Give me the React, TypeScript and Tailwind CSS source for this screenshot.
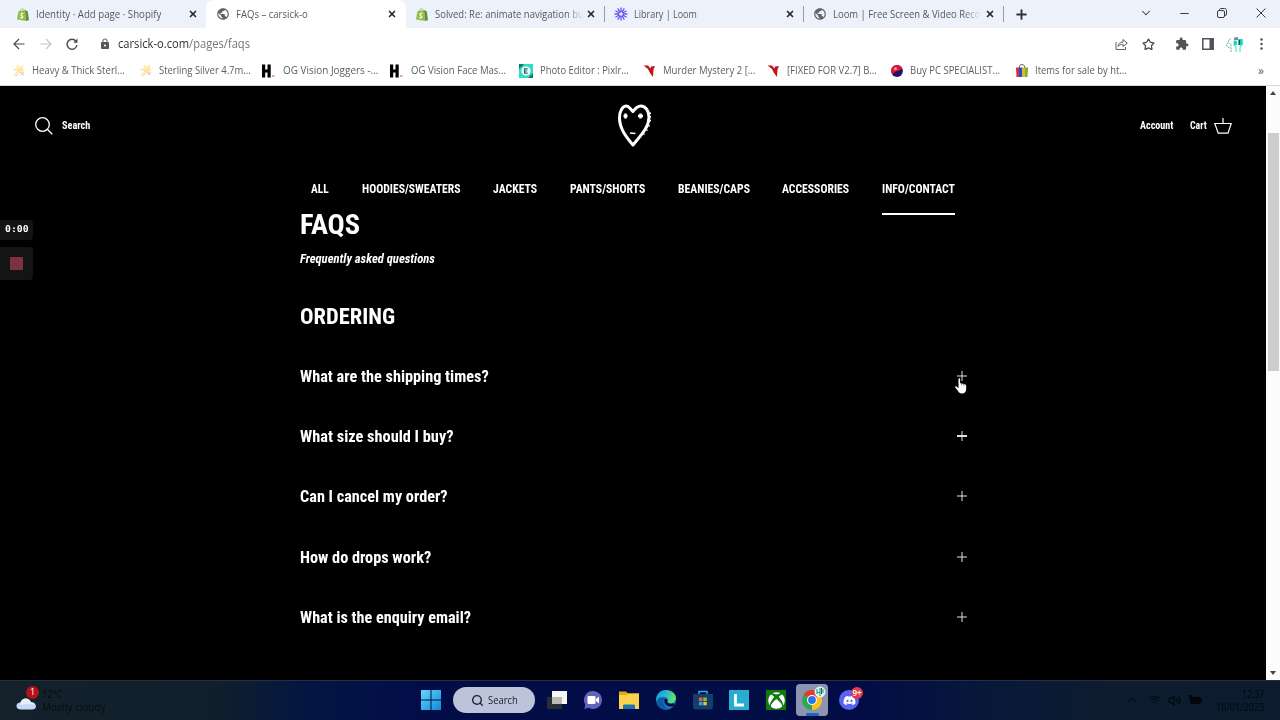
import { useLayoutEffect, useRef, useState, type ReactNode } from "react";
import { clsx } from "clsx";
import { FaDiscord, FaXbox } from "react-icons/fa";
import { MdExtension, MdLock, MdPublic } from "react-icons/md";
import { ChevronDown, ChevronUp, Minus, Plus, Search, Star, Volume2, Wifi, X } from "lucide-react";

interface FitProps {
  className: string;
  children: ReactNode;
}

// Single-line label that is squeezed or stretched to the width of its box
function Fit({ className, children }: FitProps) {
  const box = useRef<HTMLSpanElement>(null);
  const text = useRef<HTMLSpanElement>(null);
  const [scale, setScale] = useState(1);

  useLayoutEffect(() => {
    if (box.current && text.current) {
      setScale(box.current.clientWidth / text.current.offsetWidth);
    }
  }, []);

  return (
    <span ref={box} className={clsx("block shrink-0 whitespace-nowrap", className)}>
      <span ref={text} className="inline-block origin-left" style={{ transform: `scaleX(${scale})` }}>
        {children}
      </span>
    </span>
  );
}

function ShopifyIcon() {
  return (
    <svg viewBox="0 0 12 13" className="h-[13px] w-3">
      <path d="M1.4 3.2 8 2l1.2 10.9L0 11.5Z" fill="#95bf47" />
      <path d="m8 2 2.7 1.2L12 12l-2.8.9Z" fill="#5e8e3e" />
      <path d="M3.4 3C3.8 1.2 5 .3 6 .6c.8.3 1 1.2 1 2" fill="none" stroke="#95bf47" strokeWidth="0.8" />
      <path d="M6.4 5.5C5 4.9 3.8 5.5 4 6.7c.2 1 1.9 1.1 1.8 2.3-.1 1.1-1.4 1.2-2.5.4" fill="none" stroke="#fff" strokeWidth="1.2" />
    </svg>
  );
}

function LoomIcon() {
  return (
    <svg viewBox="0 0 14 14" className="size-[14px]" stroke="#6558f5" strokeWidth="1.3" strokeLinecap="round">
      {[0, 30, 60, 90, 120, 150].map((angle) => (
        <path key={angle} d="M7 1v12" transform={`rotate(${angle} 7 7)`} />
      ))}
      <circle cx="7" cy="7" r="2.4" fill="#edf1f9" strokeWidth="1.2" />
    </svg>
  );
}

function SilverIcon() {
  return (
    <svg viewBox="0 0 14 14" className="size-[14px]" fill="none">
      <path d="M3.500 4 8 2l3.500 2 .5 3-3 2.500L5 9Z" fill="#fcedb4" />
      <path d="M1.500 5 4 6M5 1l1 2M2 11l8-7M11 1l-1.5 2" stroke="#f8d98a" strokeWidth="1" />
      <path d="m3.500 12.500 3-3M9 11l3-3M8 8l4 3" stroke="#f2bfa6" strokeWidth="1" />
    </svg>
  );
}

function VisionIcon() {
  return (
    <svg viewBox="0 0 14 14" className="size-[14px]">
      <path d="M0 .5h3.200v5h2.300v-5h3.200v13H5.500v-5H3.200v5H0Z" fill="#000" />
      <path d="M10 11h2.500v2H10z" fill="#e3a2ac" />
    </svg>
  );
}

function PixlrIcon() {
  return (
    <svg viewBox="0 0 14 14" className="size-[14px]">
      <path d="M0 0h14v14H0Z" fill="#2edcc8" />
      <path d="M0 0h5L0 5ZM14 9v5H9Z" fill="#15766e" />
      <circle cx="7" cy="7" r="4.600" fill="#fff" />
      <path d="M8.700 4.800H5.500v4.400h3.200M5.500 7h2.800" fill="none" stroke="#1f625e" strokeWidth="1.200" />
    </svg>
  );
}

function MysteryIcon() {
  return (
    <svg viewBox="0 0 14 14" className="size-[14px]">
      <path d="M.5 1.500 5 1.500l2.500 3 .5-2L12 2l-1.500 3.500L10 13 7 9 5 5Z" fill="#c3131d" />
    </svg>
  );
}

function PcIcon() {
  return (
    <svg viewBox="0 0 14 14" className="size-[14px]">
      <circle cx="7" cy="7" r="5.900" fill="#1b1464" />
      <path d="M1.200 7a5.900 5.900 0 0 1 11-3C10 8 5 6 2.500 10.600A6 6 0 0 1 1.200 7Z" fill="#e0153d" />
      <circle cx="5.500" cy="4.800" r="1.500" fill="#ff9aa9" />
    </svg>
  );
}

function BagIcon() {
  return (
    <svg viewBox="0 0 14 14" className="size-[14px]">
      <path d="M4.500 5V2.500c0-2.500 5-2.500 5 0V5" fill="none" stroke="#555" />
      <path d="M1 3.500h3v9.500H1.500Z" fill="#d92d3c" />
      <path d="M4 3.500h3.500V13H4Z" fill="#2453c6" />
      <path d="M7.500 3.500H10V13H7.500Z" fill="#f3b51b" />
      <path d="M10 3.500h3l-.5 9.500H10Z" fill="#7fae2a" />
    </svg>
  );
}

const tabs = [
  { title: "Identity · Add page · Shopify", icon: <ShopifyIcon />, box: "w-[206px] pl-[16px]", width: "w-[125px]", close: "right-[8px]" },
  { title: "FAQs – carsick-o", icon: <MdPublic size={14} color="#5f6368" />, box: "w-[200px] pl-[10px] rounded-t-lg bg-white", width: "w-[72px]", close: "right-[9px]" },
  { title: "Solved: Re: animate navigation bu", icon: <ShopifyIcon />, box: "w-[199px] pl-[9px] border-r border-[#989ba3]", width: "w-[149px]", close: "right-[8px]", fade: true },
  { title: "Library | Loom", icon: <LoomIcon />, box: "w-[199px] pl-[9px] border-r border-[#989ba3]", width: "w-[63px]", close: "right-[8px]" },
  { title: "Loom | Free Screen & Video Reco", icon: <MdPublic size={14} color="#5f6368" />, box: "w-[200px] pl-[9px] border-r border-[#989ba3]", width: "w-[148px]", close: "right-[8px]", fade: true },
];

const bookmarks = [
  { title: "Heavy & Thick Sterl...", icon: <SilverIcon />, box: "w-[126.500px]", width: "w-[93px]" },
  { title: "Sterling Silver 4.7m...", icon: <SilverIcon />, box: "w-[123.500px]", width: "w-[92px]" },
  { title: "OG Vision Joggers -...", icon: <VisionIcon />, box: "w-[128px]", width: "w-[95px]", wide: true },
  { title: "OG Vision Face Mas...", icon: <VisionIcon />, box: "w-[129px]", width: "w-[95px]", wide: true },
  { title: "Photo Editor : Pixlr...", icon: <PixlrIcon />, box: "w-[124px]", width: "w-[89px]", wide: true },
  { title: "Murder Mystery 2 [...", icon: <MysteryIcon />, box: "w-[124px]", width: "w-[92px]" },
  { title: "[FIXED FOR V2.7] B...", icon: <MysteryIcon />, box: "w-[123px]", width: "w-[90px]" },
  { title: "Buy PC SPECIALIST...", icon: <PcIcon />, box: "w-[125px]", width: "w-[90px]" },
  { title: "Items for sale by ht...", icon: <BagIcon />, box: "w-[124px]", width: "w-[92px]" },
];

function TabStrip() {
  return (
    <div className="flex h-7 items-center bg-[#edf1f9] text-[11px] text-[#55585e]">
      {tabs.map((tab) => (
        <div key={tab.title} className={clsx("relative flex items-center", tab.box, tab.box.includes("border-r") ? "h-4" : "h-full")}>
          <span className="mr-[6px] flex w-[14px] shrink-0 justify-center">{tab.icon}</span>
          <span className={clsx("overflow-hidden", tab.fade && "[mask-image:linear-gradient(to_right,#000_88%,transparent)]")}>
            <Fit className={tab.width}>{tab.title}</Fit>
          </span>
          <X size={10} strokeWidth={4} className={clsx("absolute text-[#25272b]", tab.close)} />
        </div>
      ))}
      <Plus size={15} strokeWidth={3} className="ml-[10px] text-[#303238]" />
      <div className="ml-auto flex items-center pb-[2px] pr-[14px] text-[#3a3c42]">
        <ChevronDown size={14} strokeWidth={1.800} className="mr-[25px]" />
        <Minus size={13} strokeWidth={2} className="mr-[26px]" />
        <svg viewBox="0 0 10 10" className="mr-[29px] size-[10px]" fill="none" stroke="currentColor">
          <rect x="0.500" y="2.500" width="7" height="7" rx="1.500" />
          <path d="M2.500 2.500V2c0-1 .5-1.500 1.500-1.500h3.500c1.300 0 2 .7 2 2V6c0 1-.5 1.500-1.500 1.500" />
        </svg>
        <svg viewBox="0 0 10 10" className="size-[10px]" fill="none" stroke="currentColor">
          <path d="m.5.5 9 9M9.500.5l-9 9" />
        </svg>
      </div>
    </div>
  );
}

function Toolbar() {
  return (
    <div className="flex h-8 items-center bg-white pl-[13px] text-[12px] text-[#4a4d52]">
      <svg viewBox="0 0 12 12" className="mr-[15px] size-3" fill="none" stroke="currentColor" strokeWidth="1.200">
        <path d="M11.500 6H1M6 1 1 6l5 5" />
      </svg>
      <svg viewBox="0 0 12 12" className="mr-[14px] size-3" fill="none" stroke="#c3c5c9" strokeWidth="1.200">
        <path d="M.5 6H11M6 1l5 5-5 5" />
      </svg>
      <svg viewBox="0 0 12 12" className="mr-[21px] size-3" fill="none" stroke="currentColor" strokeWidth="1.400">
        <path d="M10 3.200A5 5 0 1 0 11 7" />
        <path d="M11.500.5v4.200H7.300Z" fill="currentColor" stroke="none" />
      </svg>
      <MdLock size={12} className="mr-[7px] text-[#55585d]" />
      <Fit className="w-[132px]">
        <span className="text-[#303135]">carsick-o.com</span>
        <span className="text-[#73767b]">/pages/faqs</span>
      </Fit>
      <div className="ml-auto flex items-center pr-[17px]">
        <svg viewBox="0 0 13 12" className="mr-[14px] h-3 w-[13px]" fill="none" stroke="#5f6368">
          <path d="M1 4v7.500h9.500V9" />
          <path d="M3 8.500C3.300 5.500 5 4 8 4V1.500l4.300 3.700L8 8.500V6.300C5.700 6.200 4.200 7 3 8.500Z" />
        </svg>
        <Star size={13} strokeWidth={2.400} className="mr-[20px]" />
        <MdExtension size={14} className="mr-[13px] text-[#505358]" />
        <svg viewBox="0 0 12 12" className="mr-[12px] size-3">
          <path d="M.8.8h10.400v10.400H.8Z" fill="none" stroke="#505358" strokeWidth="1.500" />
          <path d="M7.500 1H11v10H7.500Z" fill="#505358" />
        </svg>
        <svg viewBox="0 0 18 17" className="mr-[16px] h-[17px] w-[18px]" fill="none">
          <path d="M5 2.500C3 3.500 2 5 2.500 7l-2 1L1 10.500 4 12M5 16V8.500L3.500 7" stroke="#74a8a0" strokeDasharray="2 0.800" />
          <path d="M8 5v4.500l2 1V16M16.500 3v5L14 11v5" stroke="#5ee3c8" strokeWidth="1.200" />
          <path d="M8 5h3v4H8ZM12 3h4v6h-4Z" fill="#20d7b1" />
          <path d="M9 1.500v3M11 1v3M13.500 4v5" stroke="#154d54" strokeWidth="1.200" />
        </svg>
        <svg viewBox="0 0 3 12" className="h-3 w-[3px]" fill="#4a4d52">
          <circle cx="1.500" cy="1.500" r="1.200" />
          <circle cx="1.500" cy="6" r="1.200" />
          <circle cx="1.500" cy="10.500" r="1.200" />
        </svg>
      </div>
    </div>
  );
}

function Bookmarks() {
  return (
    <div className="flex h-[26px] items-center border-b border-[#d8d9dc] bg-white pb-[4px] pl-[12px] text-[11px] text-[#5a5d62]">
      {bookmarks.map((item) => (
        <div key={item.title} className={clsx("flex shrink-0 items-center", item.box)}>
          <span className={clsx("shrink-0", item.wide ? "mr-[7px]" : "mr-[6px]")}>{item.icon}</span>
          <Fit className={item.width}>{item.title}</Fit>
        </div>
      ))}
      <span className="ml-auto pr-[16px] text-[12px]">»</span>
    </div>
  );
}

const menu = [
  { label: "ALL", width: "w-[18px]" },
  { label: "HOODIES/SWEATERS", width: "w-[99px]" },
  { label: "JACKETS", width: "w-[44px]" },
  { label: "PANTS/SHORTS", width: "w-[75px]" },
  { label: "BEANIES/CAPS", width: "w-[72px]" },
  { label: "ACCESSORIES", width: "w-[67px]" },
  { label: "INFO/CONTACT", width: "w-[73px]", active: true },
];

const questions = [
  { text: "What are the shipping times?", width: "w-[188.500px]" },
  { text: "What size should I buy?", width: "w-[152.500px]", bold: true },
  { text: "Can I cancel my order?", width: "w-[148px]" },
  { text: "How do drops work?", width: "w-[131px]" },
  { text: "What is the enquiry email?", width: "w-[171px]" },
];

function HeartLogo() {
  return (
    <svg viewBox="0 0 34 44" className="-mt-[3px] h-11 w-[34px]" fill="none" stroke="#fff">
      <path d="M16 42C10 35 2.500 26 2.500 15 2.500 8 5.500 3.500 9 3c3-.3 4 3 7 5.500C18.500 5 21 3 24 3 28.500 3 32 8 32 14 32 25 23 33 16 42Z" strokeWidth="3" strokeLinejoin="round" />
      <path d="M33.500 9.500v1.500M33.800 13v1.500M33.300 17v1.500M32 22v1.500M29.500 27l1 .5M26.500 31l1 .5" strokeWidth="1.500" />
      <path d="M6.500 13h4M8.500 10.500v5M21 13h5M23.500 10.500v5" strokeWidth="2.500" />
      <path d="m13 30 5.500.6" strokeWidth="1.500" />
    </svg>
  );
}

function StoreHeader() {
  return (
    <header className="h-[129px] shrink-0">
      <div className="flex h-20 items-center justify-between pl-[35px] pr-[34px] text-[11px] font-bold">
        <div className="flex w-[200px] items-center">
          <svg viewBox="0 0 18 18" className="mr-[9px] size-[18px]" fill="none" stroke="#fff" strokeWidth="1.300">
            <circle cx="7.500" cy="7.500" r="6.800" />
            <path d="m12.300 12.300 5 5" />
          </svg>
          <Fit className="w-[28px]">Search</Fit>
        </div>
        <HeartLogo />
        <div className="flex w-[200px] items-center justify-end">
          <Fit className="mr-[17px] w-[33px]">Account</Fit>
          <Fit className="mr-[7px] w-[17px]">Cart</Fit>
          <svg viewBox="0 0 18 17" className="-mt-[2px] h-[17px] w-[18px]" fill="none" stroke="#fff" strokeWidth="1.200">
            <path d="M.8 6.500h16.400L14 16.200H4.200ZM9 1v5.500" />
          </svg>
        </div>
      </div>
      <nav className="flex h-[49px] gap-[32.700px] pl-[311px] text-[12px] font-bold leading-[18px]">
        {menu.map((item) => (
          <div key={item.label} className={clsx("flex pt-[14px]", item.active && "border-b-2 border-white")}>
            <Fit className={item.width}>{item.label}</Fit>
          </div>
        ))}
      </nav>
    </header>
  );
}

function PlusMark({ bold }: { bold?: boolean }) {
  return (
    <svg viewBox="0 0 10 10" className="size-[10px]" stroke="#e2e2e2">
      <path d="M0 5h10" strokeWidth={bold ? 2 : 1} />
      <path d="M5 0v10" />
    </svg>
  );
}

function Recorder() {
  return (
    <div className="absolute left-0 top-[134px] flex flex-col gap-[7px]">
      <div className="flex h-5 w-[33px] items-center rounded-r bg-[#141414] pl-[5px] font-['DejaVu_Sans_Mono'] text-[9px] font-bold">
        <Fit className="w-6">0:00</Fit>
      </div>
      <div className="flex h-[33px] w-[33px] items-center rounded-r bg-[#141414] pl-[10px]">
        <span className="size-[13px] bg-[#7c3244]" />
      </div>
    </div>
  );
}

function HandCursor() {
  return (
    <svg viewBox="0 0 12 16" className="absolute left-0 top-[3px] h-4 w-3">
      <path d="M3.500 1c0-1 1.600-1 1.600 0v4.300l1.700.2 1.700.4 1.700.5c.8.3 1 .8 1 1.600v3c0 2.500-1.500 4.500-4.200 4.500-2.500 0-3.500-1.300-4.500-3.200L.3 9.500c-.6-1.200.7-1.700 1.500-.8l1.700 1.600Z" fill="#fff" />
      <path d="M6.600 5.500v2M8.600 6v1.800" stroke="#333" strokeWidth="0.500" />
    </svg>
  );
}

function StorePage() {
  return (
    <div className="flex h-[594px] bg-black">
      <div className="relative flex w-[1266px] flex-col font-['Roboto_Condensed','Roboto',sans-serif] text-white [font-stretch:75%]">
        <StoreHeader />
        <main className="ml-[299.500px] w-[667px] font-bold">
          <h1 className="-mt-[6px] flex h-8 text-[28px] leading-8"><Fit className="w-[60px]">FAQS</Fit></h1>
          <p className="mt-[8px] flex text-[12px] italic leading-5"><Fit className="w-[135px]">Frequently asked questions</Fit></p>
          <h2 className="mt-[33px] flex text-[22px] leading-[30px]"><Fit className="w-[95px]">ORDERING</Fit></h2>
          <div className="mt-[15px]">
            {questions.map((q, index) => (
              <div key={q.text} className="flex h-[60.200px] items-center justify-between text-[16px]">
                <Fit className={q.width}>{q.text}</Fit>
                <span className="mb-[2px]">
                  <span className="relative block">
                    <PlusMark bold={q.bold} />
                    {index === 0 && <span className="absolute -left-[2px] top-[4px]"><HandCursor /></span>}
                  </span>
                </span>
              </div>
            ))}
          </div>
        </main>
        <Recorder />
      </div>
      <div className="flex w-[14px] flex-col items-center justify-between bg-[#fcfcfc] py-[5px]">
        <svg viewBox="0 0 6 4" className="h-1 w-[6px]"><path d="M0 4 3 0l3 4Z" fill="#444" /></svg>
        <div className="mb-auto mt-[38px] h-[238px] w-[11px] bg-[#cdcdcd]" />
        <svg viewBox="0 0 6 4" className="h-1 w-[6px]"><path d="m0 0 3 4 3-4Z" fill="#444" /></svg>
      </div>
    </div>
  );
}

function EdgeIcon() {
  return (
    <svg viewBox="0 0 20 20" className="size-5">
      <defs>
        <linearGradient id="edge" x1="0" y1="0" x2="1" y2="0.300">
          <stop offset="0" stopColor="#1896dc" />
          <stop offset="0.500" stopColor="#22b9d7" />
          <stop offset="1" stopColor="#62dd69" />
        </linearGradient>
      </defs>
      <circle cx="10" cy="10" r="10" fill="#1576c8" />
      <path d="M0 9.500C.5 4 4.500 0 10 0c6 0 10 4 10 8 0 3.500-3 5.500-6 5.500-2 0-3-.7-2.300-1.600C13 10 11.500 6.700 7.500 6.700 4 6.700 1 8 0 11Z" fill="url(#edge)" />
      <path d="M8.500 9c-1 4 2 7.500 6.500 7.500 1.800 0 3-.4 4-.8-.5-1-1-1.500-1.500-2.500-2 .8-7 .8-6-2.700.2-1.500-2.300-3-3-1.500Z" fill="#020d48" />
      <path d="M1 12c2-4 5-5 7.500-3.500C6 11.500 7.500 17 12 19.500 6 20.500 2 17 1 12Z" fill="#0c59a4" />
    </svg>
  );
}

function ChromeIcon() {
  return (
    <svg viewBox="0 0 20 20" className="size-5">
      <path d="M10 10 1.340 5A10 10 0 0 1 18.660 5Z" fill="#e33b2e" />
      <path d="M10 10 18.660 5A10 10 0 0 1 10 20Z" fill="#fbc116" />
      <path d="M10 10v10A10 10 0 0 1 1.340 5Z" fill="#2da94f" />
      <circle cx="10" cy="10" r="5" fill="#fff" />
      <circle cx="10" cy="10" r="3.900" fill="#2a74e8" />
    </svg>
  );
}

function Taskbar() {
  return (
    <footer className="flex h-10 items-center border-t border-[#262e3f] bg-[linear-gradient(to_right,#14212b_0%,#101f2c_17%,#031642_24%,#020d48_33%,#020d45_68%,#07183a_77%,#0d1c2e_87%,#0c1b2d_100%)] pb-px text-[11px]">
      <div className="flex w-[421px] items-center pl-[16px] text-[#050b12]">
        <div className="relative mr-[5px] mt-px">
          <svg viewBox="0 0 21 22" className="h-[22px] w-[21px]">
            <path d="M5 19.500c-6 0-6-7-.5-7C6 7.500 13 7 15 12.200c6 0 7 7.300 1 7.300Z" fill="#c6d8f6" />
            <path d="M4.500 12.500C6 7.500 13 7 15 12.200c2 0 4 1 4 3-4-2-10-1-14.500 0Z" fill="#e7eefb" />
          </svg>
          <span className="absolute -top-[4px] left-[10px] flex size-[13px] items-center justify-center rounded-full bg-[#b5121b] text-[9px] text-white">1</span>
        </div>
        <div className="pb-px leading-[13px]">
          <Fit className="w-5">12°C</Fit>
          <Fit className="w-[63px]">Mostly cloudy</Fit>
        </div>
      </div>
      <svg viewBox="0 0 20 20" className="mr-[12px] size-5">
        <defs>
          <linearGradient id="win" x1="0" y1="0" x2="1" y2="1">
            <stop offset="0" stopColor="#62d8fb" />
            <stop offset="1" stopColor="#1089d8" />
          </linearGradient>
        </defs>
        <path d="M0 0h9.500v9.500H0ZM10.500 0H20v9.500h-9.500ZM0 10.500h9.500V20H0ZM10.500 10.500H20V20h-9.500Z" fill="url(#win)" />
      </svg>
      <div className="mr-[12px] flex h-[26px] w-[82px] items-center rounded-full bg-[#bdc4d9] pl-[18px] text-[#20222c]">
        <Search size={13} strokeWidth={2.600} className="mr-[4px]" />
        <Fit className="w-[30px]">Search</Fit>
      </div>
      <div className="flex items-center gap-[16.700px]">
        <svg viewBox="0 0 20 20" className="size-5">
          <path d="M0 7h15v12H0Z" fill="#292b35" />
          <path d="M5 1h15v13H5Z" fill="#f6f6f6" />
          <path d="M5 7h10v7H5Z" fill="#bbb9b8" />
        </svg>
        <svg viewBox="0 0 20 20" className="-ml-px size-5">
          <path d="M10 1a9 9 0 1 1-4.500 16.800L1.500 19l.7-4.500A9 9 0 0 1 10 1Z" fill="#6661b9" />
          <rect x="4.500" y="6" width="8" height="8" rx="1" fill="#fff" />
          <path d="m13 9 3-2.500v7L13 11Z" fill="#fff" />
        </svg>
        <svg viewBox="0 0 20 20" className="size-5">
          <path d="M0 1.500h7l2 2h11v6H0Z" fill="#e8a514" />
          <path d="M0 5h7l2-1.500h11V19H0Z" fill="#fad34d" />
          <path d="M4 19v-3c0-1 .5-1.500 1.500-1.500h9c1 0 1.500.5 1.500 1.500v3Z" fill="#1c74b9" />
        </svg>
        <EdgeIcon />
        <svg viewBox="0 0 20 20" className="size-5">
          <path d="M6 5V1.500h8V5" fill="none" stroke="#37a8e7" strokeWidth="1.500" />
          <path d="M0 4h20v13c0 1.500-1 2.500-2.500 2.500h-15C1 19.500 0 18.500 0 17Z" fill="#133e6b" />
          <path d="M6 7.500h3.500V11H6Z" fill="#ef5a3c" />
          <path d="M10.300 7.500h3.500V11h-3.500Z" fill="#8abb32" />
          <path d="M6 11.800h3.500v3.500H6Z" fill="#2ba8e3" />
          <path d="M10.300 11.800h3.500v3.500h-3.500Z" fill="#f5bd2d" />
        </svg>
        <svg viewBox="0 0 20 20" className="size-5">
          <path d="M0 0h20v20H0Z" fill="#28acd0" />
          <path d="M6.500 4v11h8.500" fill="none" stroke="#fff" strokeWidth="2.800" />
        </svg>
        <span className="flex size-5 items-center justify-center bg-[#107c10]"><FaXbox size={17} color="#fff" /></span>
      </div>
      <div className="relative ml-[10px] flex h-8 w-8 items-center justify-center rounded bg-[#8e93b1]">
        <ChromeIcon />
        <svg viewBox="0 0 12 12" className="absolute right-[2px] top-[2px] size-3">
          <circle cx="6" cy="6" r="5.500" fill="#e4f3f1" />
          <path d="M3 3v5M6 2v8M9 3v4M3 6l3 1" stroke="#26aa91" strokeWidth="1.200" />
          <path d="M7.500 2v6" stroke="#28525d" />
        </svg>
        <span className="absolute bottom-0 h-[3px] w-[13px] rounded-full bg-[#1765bd]" />
      </div>
      <div className="relative ml-[11px] flex size-[20px] items-center justify-center rounded-full bg-[#5865f2]">
        <FaDiscord size={13} color="#fff" />
        <span className="absolute -right-[4px] -top-[3px] flex h-[12px] w-[12px] items-center justify-center rounded-full bg-[#df3c4c] text-[8px] font-semibold text-white">9+</span>
      </div>
      <div className="ml-auto flex items-center pr-[16px] text-[#03070d]">
        <ChevronUp size={14} strokeWidth={1.800} className="mr-[10px]" />
        <Wifi size={12} strokeWidth={2} className="mr-[7px]" />
        <Volume2 size={13} strokeWidth={2} className="mr-[8px]" />
        <svg viewBox="0 0 13 10" className="mr-[14px] h-[10px] w-[13px]">
          <path d="M1 2h10.500v7H1ZM11.500 4H13v3h-1.500ZM0 0h4v4H0Z" fill="currentColor" />
        </svg>
        <div className="flex flex-col items-end pb-px leading-[13px]">
          <Fit className="w-[22px]">12:37</Fit>
          <Fit className="w-[48px]">10/01/2023</Fit>
        </div>
      </div>
    </footer>
  );
}

export default function App() {
  return (
    <div className="h-[720px] w-[1280px] overflow-hidden font-['Open_Sans','Noto_Sans',sans-serif]">
      <TabStrip />
      <Toolbar />
      <Bookmarks />
      <StorePage />
      <Taskbar />
    </div>
  );
}
